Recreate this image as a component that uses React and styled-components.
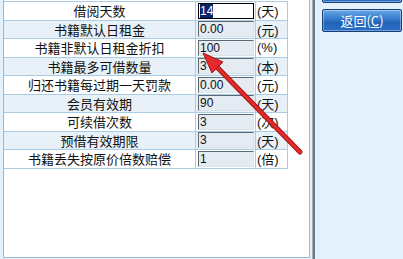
import React from 'react';
import styled, { createGlobalStyle } from 'styled-components';

const GlobalStyle = createGlobalStyle`
    body {
        margin: 0;
        overflow: hidden;
        font-family: "Liberation Sans", "Noto Sans CJK SC", sans-serif;
    }
`;

const Screen = styled.div`
    position: relative;
    display: flex;
    width: 403px;
    height: 259px;
    background-color: #e2f1fc;
    overflow: hidden;
`;

const LeftPane = styled.div`
    box-sizing: border-box;
    width: 307px;
    height: 258px;
    margin-left: 3px;
    background-color: #fff;
    border: 1px solid #93bcd9;
    border-top: none;
`;

const Splitter = styled.div`
    width: 2px;
    margin-left: 2px;
    background-color: #6c7a86;
    border-left: 1px solid #a4afb8;
`;

const RightPane = styled.div`
    display: flex;
    flex-direction: column;
    gap: 6px;
    padding-left: 7px;
    margin-top: -20px;
`;

const Button = styled.button`
    box-sizing: border-box;
    width: 80px;
    height: 23px;
    padding: 0;
    border: 1px solid #173f78;
    border-radius: 2px;
    background: linear-gradient(#6aa8e6 0%, #3178cc 45%, #2263b8 60%, #2a6fc4 100%);
    box-shadow: inset 0 0 0 1px rgba(255, 255, 255, 0.35);
    color: #fff;
    font-family: "Noto Sans CJK SC", sans-serif;
    font-size: 13px;
    line-height: 20px;
    text-align: center;
    u {
        text-decoration: underline;
    }
`;

const Grid = styled.div`
    width: 284px;
    margin-top: 1px;
    border-top: 1px solid #a9cce4;
`;

const Row = styled.div`
    box-sizing: border-box;
    display: grid;
    grid-template-columns: 192px 60px 32px;
    height: 18.5px;
    background-color: ${(p) => (p.$alt ? '#e8f1f8' : '#fff')};
`;

const Cell = styled.div`
    box-sizing: border-box;
    display: flex;
    align-items: center;
    border-right: 1px solid #a9cce4;
    border-bottom: 1px solid #a9cce4;
    overflow: hidden;
`;

const Label = styled(Cell)`
    justify-content: center;
    font-family: "Noto Sans CJK SC", sans-serif;
    font-size: 13px;
    color: #111;
`;

const InputCell = styled(Cell)`
    padding-left: 2px;
`;

const Field = styled.div`
    box-sizing: border-box;
    width: 56px;
    height: 16px;
    padding-left: 1px;
    background-color: ${(p) => (p.$focus ? '#fff' : '#e4ebf2')};
    border: 1px solid;
    border-color: ${(p) => (p.$focus ? '#000' : '#5c6873 #d9e3ec #d9e3ec #5c6873')};
    font-family: "Liberation Sans", sans-serif;
    font-size: 12px;
    line-height: 14px;
    color: #111;
`;

const Selected = styled.span`
    background-color: #0a246a;
    color: #fff;
`;

const Unit = styled(Cell)`
    padding-left: 1px;
    font-family: "Liberation Sans", "Noto Sans CJK SC", sans-serif;
    font-size: 13px;
    color: #111;
`;

const Overlay = styled.svg`
    position: absolute;
    left: 0;
    top: 0;
    pointer-events: none;
`;

const rows = [
    { label: '借阅天数', value: '14', unit: '(天)', focus: true },
    { label: '书籍默认日租金', value: '0.00', unit: '(元)' },
    { label: '书籍非默认日租金折扣', value: '100', unit: '(%)' },
    { label: '书籍最多可借数量', value: '3', unit: '(本)' },
    { label: '归还书籍每过期一天罚款', value: '0.00', unit: '(元)' },
    { label: '会员有效期', value: '90', unit: '(天)' },
    { label: '可续借次数', value: '3', unit: '(次)' },
    { label: '预借有效期限', value: '3', unit: '(天)' },
    { label: '书籍丢失按原价倍数赔偿', value: '1', unit: '(倍)' },
];

const App = () => {
    return (
        <Screen>
            <GlobalStyle />
            <LeftPane>
                <Grid>
                    {rows.map((r, i) => (
                        <Row key={r.label} $alt={i % 2 === 1}>
                            <Label>{r.label}</Label>
                            <InputCell>
                                <Field $focus={r.focus}>
                                    {r.focus ? <Selected>{r.value}</Selected> : r.value}
                                </Field>
                            </InputCell>
                            <Unit>{r.unit}</Unit>
                        </Row>
                    ))}
                </Grid>
            </LeftPane>
            <Splitter />
            <RightPane>
                <Button aria-label="确定" />
                <Button>返回(<u>C</u>)</Button>
            </RightPane>
            <Overlay width="403" height="259">
                <line x1="300" y1="152" x2="214" y2="64" stroke="#a81414" strokeWidth="5" strokeLinecap="round" />
                <line x1="300" y1="152" x2="214" y2="64" stroke="#e42a2a" strokeWidth="3" strokeLinecap="round" />
                <polygon points="203,53 223,62 212,73" fill="#e42a2a" stroke="#a81414" strokeWidth="1" strokeLinejoin="round" />
            </Overlay>
        </Screen>
    );
};

export default App;
